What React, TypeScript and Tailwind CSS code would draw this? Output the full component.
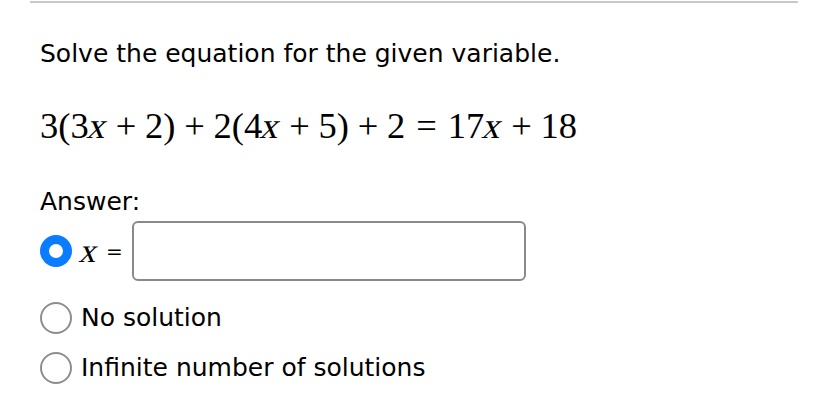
import React, { useState } from 'react';

const sans = { fontFamily: '"DejaVu Sans", sans-serif' };
const serif = { fontFamily: '"Liberation Serif", serif' };

function Op({ children, wide }: { children: React.ReactNode; wide?: boolean }) {
  return <span className={wide ? 'mx-[0.3em]' : 'mx-[0.24em]'}>{children}</span>;
}

// math italic x (no italic face installed, so slant the serif glyph)
function X({ className = '' }: { className?: string }) {
  return (
    <span className={`inline-block -skew-x-[14deg] ${className}`} style={serif}>
      x
    </span>
  );
}

function Radio({ checked, onClick }: { checked: boolean; onClick: () => void }) {
  return (
    <button
      onClick={onClick}
      className={`w-[32px] h-[32px] rounded-full shrink-0 ${
        checked ? 'border-[9.5px] border-[#0a7cff] bg-white' : 'border-[2.5px] border-[#8e8e8e] bg-white'
      }`}
    />
  );
}

export default function App() {
  const [choice, setChoice] = useState<'value' | 'none' | 'inf'>('value');

  return (
    <div className="w-[828px] h-[409px] bg-white text-black overflow-hidden" style={sans}>
      <div className="ml-[30px] mt-[1px] w-[768px] h-[2px] bg-[#c8c8c8]" />

      <div className="pl-[40px]">
        <p className="mt-[36px] text-[25px] leading-[30px]">Solve the equation for the given variable.</p>

        <p className="mt-[37px] text-[36.5px] leading-[40px] whitespace-nowrap" style={serif}>
          3(3<X />
          <Op>+</Op>2)
          <Op>+</Op>2(4<X />
          <Op>+</Op>5)
          <Op>+</Op>2
          <Op wide>=</Op>17<X />
          <Op>+</Op>18
        </p>

        <p className="mt-[41px] text-[25px] leading-[30px]">Answer:</p>

        <div className="mt-[4px] flex items-center h-[60px]">
          <Radio checked={choice === 'value'} onClick={() => setChoice('value')} />
          <X className="ml-[9px] text-[34px] leading-none" />
          <span className="ml-[8px] text-[20px]">=</span>
          <input
            className="ml-[9px] w-[394px] h-[60px] rounded-[6px] border-2 border-[#8a8a8a] outline-none px-3 text-[22px]"
            onFocus={() => setChoice('value')}
          />
        </div>

        <div className="mt-[21px] flex flex-col gap-[18px]">
          <label className="flex items-center gap-[9px] h-[32px] cursor-pointer">
            <Radio checked={choice === 'none'} onClick={() => setChoice('none')} />
            <span className="text-[25px] leading-[30px]">No solution</span>
          </label>
          <label className="flex items-center gap-[9px] h-[32px] cursor-pointer">
            <Radio checked={choice === 'inf'} onClick={() => setChoice('inf')} />
            <span className="text-[25px] leading-[30px]">Infinite number of solutions</span>
          </label>
        </div>
      </div>
    </div>
  );
}
